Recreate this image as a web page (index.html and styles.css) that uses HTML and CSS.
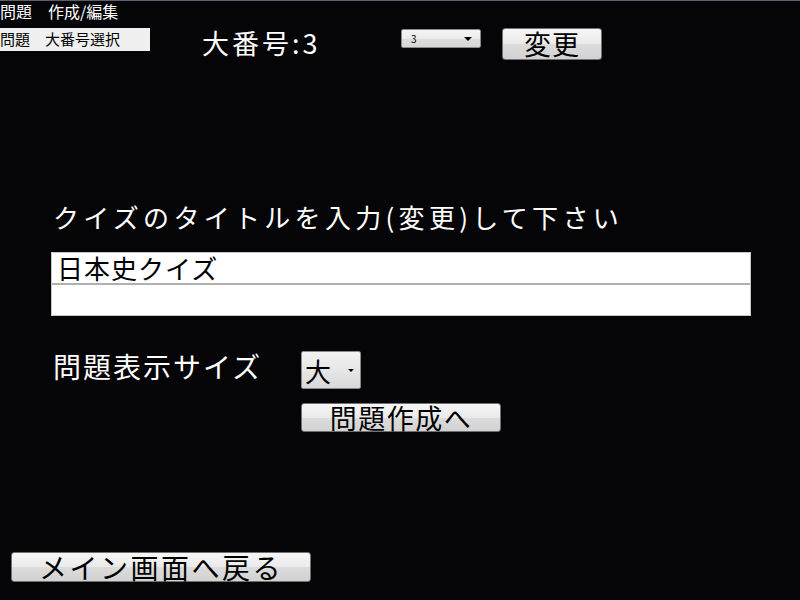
FILE: index.html
```html
<!DOCTYPE html>
<html lang="ja">
<head>
<meta charset="utf-8">
<title>問題 作成/編集</title>
<link rel="stylesheet" href="styles.css">
</head>
<body>
<div class="page">
  <div class="title">問題　作成/編集</div>
  <div class="row1">
    <div class="label-box">問題　大番号選択</div>
    <div class="bignum">大番号:3</div>
    <div class="select small-select"><span class="sel-text">3</span><span class="arrow"></span></div>
    <button class="btn btn-change">変更</button>
  </div>
  <div class="prompt">クイズのタイトルを入力(変更)して下さい</div>
  <div class="textbox">
    <div class="tb-row tb-first">日本史クイズ</div>
    <div class="tb-row"></div>
  </div>
  <div class="size-row">
    <div class="size-label">問題表示サイズ</div>
    <div class="select size-select"><span class="sel-text">大</span><span class="arrow"></span></div>
  </div>
  <button class="btn btn-create">問題作成へ</button>
  <button class="btn btn-back">メイン画面へ戻る</button>
</div>
</body>
</html>
```
FILE: styles.css
```css
html, body {
  margin: 0;
  padding: 0;
  background: #050508;
  height: 100%;
}
body {
  border-top: 1px solid #56606e;
  box-sizing: border-box;
  overflow: hidden;
  font-family: "Noto Sans CJK JP", "Noto Sans", sans-serif;
}
.page {
  display: flex;
  flex-direction: column;
  align-items: flex-start;
}
.title {
  color: #ffffff;
  font-size: 16px;
  line-height: 20px;
  height: 20px;
}
.row1 {
  display: flex;
  align-items: flex-start;
  height: 40px;
}
.label-box {
  margin-top: 7px;
  width: 150px;
  height: 23px;
  background: #f0f0f0;
  color: #000;
  font-size: 15px;
  line-height: 21px;
  box-sizing: border-box;
  white-space: nowrap;
  overflow: hidden;
}
.bignum {
  margin-left: 52px;
  width: 199px;
  margin-top: 4px;
  color: #fff;
  font-size: 27px;
  line-height: 36px;
  letter-spacing: 3px;
  white-space: nowrap;
}
.select {
  position: relative;
  box-sizing: border-box;
  border: 1px solid #8a8a8a;
  border-radius: 2px;
  background: linear-gradient(#f4f4f4 0%, #ececec 50%, #dcdcdc 51%, #d6d6d6 100%);
  color: #000;
  display: flex;
  align-items: center;
}
.arrow {
  position: absolute;
  width: 0;
  height: 0;
  border-left: 3px solid transparent;
  border-right: 3px solid transparent;
  border-top: 3px solid #000;
}
.small-select {
  margin-top: 8px;
  width: 80px;
  height: 19px;
  font-size: 10px;
  padding-left: 9px;
}
.small-select .arrow {
  right: 8px;
  top: 7px;
  border-left-width: 4px;
  border-right-width: 4px;
  border-top-width: 4px;
}
.btn {
  font-family: "Noto Sans CJK JP", "Noto Sans", sans-serif;
  box-sizing: border-box;
  border: 1px solid #707070;
  border-radius: 3px;
  background: linear-gradient(#f6f6f6 0%, #eaeaea 50%, #dcdcdc 51%, #d2d2d2 100%);
  color: #000;
  padding: 0;
  display: flex;
  align-items: center;
  justify-content: center;
}
.btn-change {
  margin-top: 7px;
  margin-left: 21px;
  width: 100px;
  height: 32px;
  font-size: 27px;
  line-height: 30px;
  letter-spacing: 1px;
}
.prompt {
  margin-top: 138px;
  margin-left: 53px;
  color: #fff;
  font-size: 26px;
  line-height: 36px;
  letter-spacing: 4.3px;
  white-space: nowrap;
}
.textbox {
  margin-top: 17px;
  margin-left: 51px;
  width: 700px;
  background: #fff;
  box-sizing: border-box;
  border: 1px solid #c8c8c8;
}
.tb-row {
  height: 30px;
  font-size: 26px;
  line-height: 30px;
  color: #000;
  padding-left: 5px;
  letter-spacing: 1px;
}
.tb-first {
  border-bottom: 2px solid #b0b0b0;
}
.size-row {
  margin-top: 35px;
  display: flex;
  align-items: flex-start;
}
.size-label {
  margin-left: 53px;
  width: 248px;
  color: #fff;
  font-size: 28px;
  line-height: 30px;
  letter-spacing: 2px;
  white-space: nowrap;
}
.size-select {
  width: 60px;
  height: 38px;
  font-size: 26px;
  padding-left: 3px;
  background: linear-gradient(#f2f2f2 0%, #e6e6e6 50%, #d8d8d8 100%);
}
.size-select .arrow {
  right: 6px;
  top: 17px;
}
.btn-create {
  margin-top: 14px;
  margin-left: 301px;
  width: 200px;
  height: 29px;
  font-size: 27px;
  line-height: 27px;
  letter-spacing: 1.5px;
}
.btn-back {
  margin-top: 120px;
  margin-left: 11px;
  width: 300px;
  height: 30px;
  font-size: 28px;
  line-height: 28px;
  letter-spacing: 2.5px;
}
```
